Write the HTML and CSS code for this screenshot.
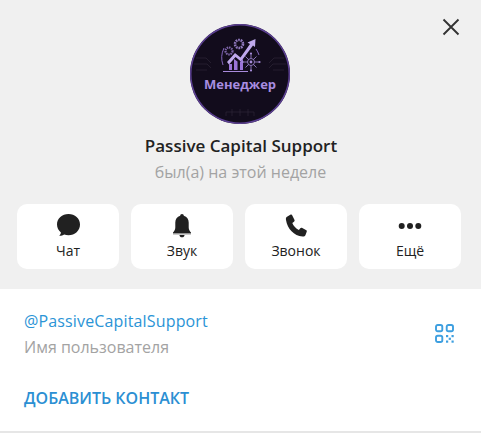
FILE: index.html
```html
<!DOCTYPE html>
<html lang="en">
<head>
    <meta charset="UTF-8">
    <meta name="viewport" content="width=device-width, initial-scale=1.0">
    <title>Passive Capital Support</title>
    <link rel="stylesheet" href="styles.css">
</head>
<body>
    <div class="profile">
        <div class="profile-head">
            <button class="close-button">
                <svg width="18" height="18" viewBox="0 0 18 18"><path d="M1.5 1.5 16.5 16.5M16.5 1.5 1.5 16.5" stroke="#333" stroke-width="1.9" fill="none"/></svg>
            </button>
            <div class="avatar">
                <svg class="avatar-art" width="100" height="100" viewBox="0 0 100 100">
                    <g fill="none" stroke="#2e2638" stroke-width="0.7">
                        <path d="M6 34h10l5 5M4 40h13l4 4M6 46h11M94 34H84l-5 5M96 40H83l-4 4M94 46H83"/>
                        <path d="M36 92v-4h28v4M42 92v-7M50 92v-7M58 92v-7"/>
                    </g>
                    <g fill="none" stroke="#8467bd" stroke-width="1">
                        <path d="M34 24a22 22 0 0 0-1 17"/>
                        <path d="M66 25a22 22 0 0 1 3 6"/>
                    </g>
                    <circle cx="39" cy="27" r="3.500" fill="none" stroke="#7d66a8" stroke-width="2.200" stroke-dasharray="1.500 0.800"/>
                    <circle cx="49" cy="20" r="4" fill="none" stroke="#8f78bc" stroke-width="2.600" stroke-dasharray="1.700 0.800"/>
                    <path d="M37 38 45 29l5.500 4.500L60 20l-2.500-1.500L65.500 15l-.5 8-2-1.500-12 16-5.500-4.500-6.500 7.500z" fill="#bfa9ec"/>
                    <path d="M39 40h3v6h-3zM44 35l3.500 2.500V46H44zM50 38l3-3.500V46h-3z" fill="#9a74d8"/>
                    <path d="M33 47.500h25" stroke="#a98bdc" stroke-width="1"/>
                    <g fill="none" stroke="#a58bd8" stroke-width="0.8">
                        <circle cx="61" cy="38" r="3.500"/>
                        <path d="M61 30v4.500M61 41.500V46M53 38h4.500M64.500 38H69M55.500 32.500l3 3M63.500 40.500l3 3M55.500 43.500l3-3M63.500 35.500l3-3"/>
                    </g>
                    <g fill="#a58bd8">
                        <circle cx="61" cy="29.500" r="1.100"/>
                        <circle cx="61" cy="46.500" r="1.100"/>
                        <circle cx="52.500" cy="38" r="1.100"/>
                        <circle cx="69.500" cy="38" r="1.100"/>
                        <circle cx="61" cy="38" r="1.400"/>
                    </g>
                </svg>
                <span class="avatar-text">Менеджер</span>
            </div>
            <div class="profile-name">Passive Capital Support</div>
            <div class="profile-status">был(а) на этой неделе</div>
            <div class="action-row">
                <div class="action">
                    <svg width="24" height="24" viewBox="0 0 24 24"><path d="M12.500 0C6.100 0 1 4.600 1 10.500c0 3.200 1.500 6 3.900 8-.1 1.200-.7 2.400-1.700 3.300 1.800.1 3.700-.3 5-1.200 1.300.4 2.800.7 4.300.7 6.400 0 11.500-4.700 11.500-10.800S18.900 0 12.500 0z" fill="#212121"/></svg>
                    <span class="action-label">Чат</span>
                </div>
                <div class="action">
                    <svg width="24" height="24" viewBox="0 0 24 24"><path d="M12 0c-1.100 0-1.800.8-1.800 1.800C7 2.600 5.300 5.300 5.300 8.500v5c0 2.400-1 3.600-2.300 5v1h18v-1c-1.300-1.400-2.300-2.600-2.300-5v-5c0-3.200-1.700-5.900-4.900-6.700C13.800.8 13.100 0 12 0z" fill="#212121"/><path d="M3 20h18" stroke="#999" stroke-width="1"/><path d="M9.500 21h5c0 1.400-1.100 2.300-2.500 2.300S9.500 22.400 9.500 21z" fill="#212121"/></svg>
                    <span class="action-label">Звук</span>
                </div>
                <div class="action">
                    <svg width="24" height="24" viewBox="0 0 24 24"><path d="M3 2.800 6.300.8c.9-.5 1.600-.3 2 .6l2.100 4.400c.4.800.2 1.400-.4 1.900L8.300 9.100c1.300 3.100 3.500 5.400 6.600 7l1.400-1.800c.5-.6 1.200-.8 2-.4l3.600 2c.9.400 1.100 1.100.8 1.900l-1.200 3.300c-.5 1.100-1.500 1.600-2.900 1.500C10 21.800 3.400 14.900 2 6 1.700 4.600 2 3.500 3 2.800z" fill="#212121"/></svg>
                    <span class="action-label">Звонок</span>
                </div>
                <div class="action">
                    <svg width="24" height="24" viewBox="0 0 24 24"><circle cx="3.700" cy="12" r="3" fill="#212121"/><circle cx="12" cy="12" r="3" fill="#212121"/><circle cx="20.300" cy="12" r="3" fill="#212121"/></svg>
                    <span class="action-label">Ещё</span>
                </div>
            </div>
        </div>
        <div class="profile-info">
            <div class="info-row">
                <div>
                    <div class="info-value">@PassiveCapitalSupport</div>
                    <div class="info-caption">Имя пользователя</div>
                </div>
                <svg class="qr-icon" width="19" height="19" viewBox="0 0 19 19">
                    <g fill="none" stroke="#3d9fe0" stroke-width="1.900">
                        <rect x="1" y="1" width="6.300" height="6.300" rx="1.800"/>
                        <rect x="11.700" y="1" width="6.300" height="6.300" rx="1.800"/>
                        <rect x="1" y="11.700" width="6.300" height="6.300" rx="1.800"/>
                    </g>
                    <g fill="#3d9fe0">
                        <rect x="11" y="11" width="2.200" height="2.200"/>
                        <rect x="16.500" y="11" width="2.200" height="2.200"/>
                        <rect x="13.700" y="13.700" width="2.200" height="2.200"/>
                        <rect x="11" y="16.500" width="2.200" height="2.200"/>
                        <rect x="16.500" y="16.500" width="2.200" height="2.200"/>
                    </g>
                </svg>
            </div>
            <div class="add-contact">ДОБАВИТЬ КОНТАКТ</div>
        </div>
    </div>
</body>
</html>
```

FILE: styles.css
```css
html, body {
    height: 100%;
}

body {
    margin: 0;
    font-family: "Open Sans", sans-serif;
    background-color: #fff;
    overflow: hidden;
}

.profile {
    display: flex;
    flex-direction: column;
    height: 433px;
}

.profile-head {
    position: relative;
    display: flex;
    flex-direction: column;
    align-items: center;
    height: 289px;
    box-sizing: border-box;
    padding-top: 24px;
    background-color: #f0f0f0;
}

.close-button {
    position: absolute;
    top: 18px;
    left: 442px;
    width: 18px;
    height: 18px;
    padding: 0;
    border: none;
    background: none;
}

.avatar {
    position: relative;
    width: 100px;
    height: 100px;
    margin-right: 1px;
    border-radius: 50%;
    background-color: #120c1c;
    box-shadow: inset 0 0 0 1.5px #5b3f92;
    overflow: hidden;
}

.avatar-art {
    display: block;
}

.avatar-text {
    position: absolute;
    top: 50px;
    left: 0;
    width: 100%;
    text-align: center;
    font-size: 13px;
    line-height: 20px;
    font-weight: 700;
    color: #a88de0;
}

.profile-name {
    margin-top: 10px;
    margin-left: 1px;
    font-size: 17px;
    line-height: 24px;
    font-weight: 600;
    color: #222;
}

.profile-status {
    margin-top: 4px;
    font-size: 16px;
    line-height: 20px;
    color: #a3a3a3;
}

.action-row {
    display: flex;
    gap: 12px;
    margin-top: 22px;
    align-self: flex-start;
    margin-left: 17px;
}

.action {
    display: flex;
    flex-direction: column;
    align-items: center;
    width: 102px;
    height: 65px;
    box-sizing: border-box;
    padding-top: 10px;
    background-color: #fff;
    border-radius: 10px;
}

.action-label {
    margin-top: 3px;
    font-size: 14px;
    line-height: 20px;
    color: #222;
}

.profile-info {
    flex: 1;
    box-sizing: border-box;
    padding: 21px 24px 0;
    background-color: #fff;
    border-bottom: 2px solid #e6e6e6;
}

.info-row {
    display: flex;
    justify-content: space-between;
    align-items: center;
}

.info-value {
    font-size: 16px;
    letter-spacing: 0.15px;
    line-height: 22px;
    color: #2b94d6;
}

.info-caption {
    margin-top: 5px;
    font-size: 16px;
    line-height: 20px;
    color: #a3a3a3;
}

.qr-icon {
    margin-right: 3px;
}

.add-contact {
    margin-top: 30px;
    font-size: 16px;
    line-height: 22px;
    font-weight: 600;
    color: #2b8fd3;
}
```
